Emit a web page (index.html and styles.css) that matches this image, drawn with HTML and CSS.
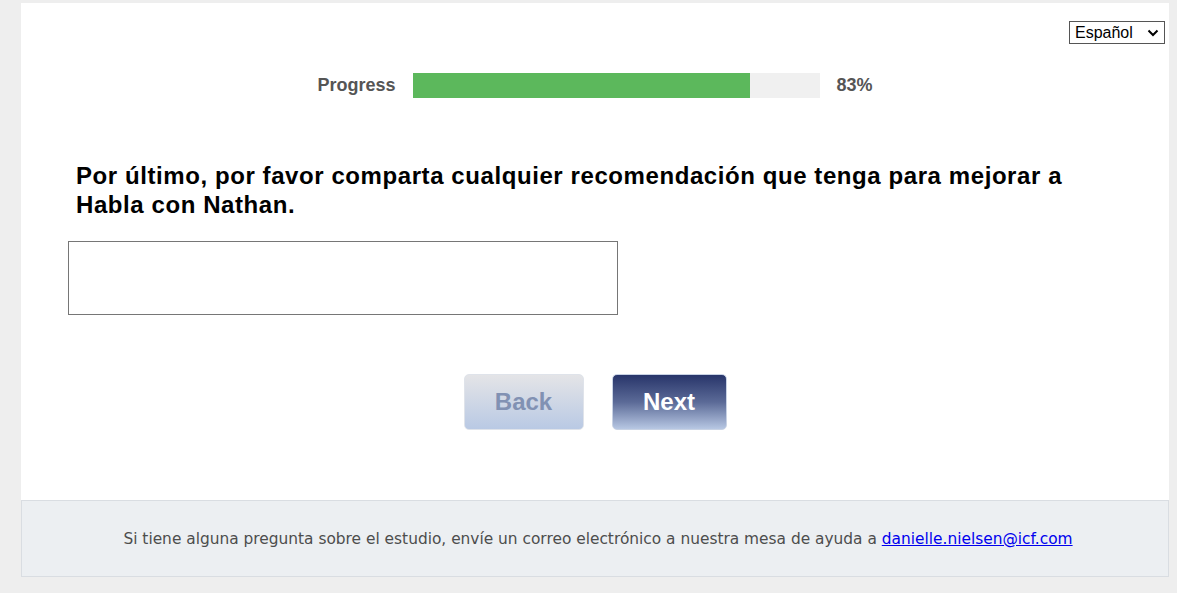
FILE: index.html
```html
<!DOCTYPE html>
<html lang="es">
<head>
<meta charset="utf-8">
<title>Encuesta</title>
<link rel="stylesheet" href="styles.css">
</head>
<body>
<div class="page">
  <main class="card">
    <div class="lang-row">
      <span class="lang-wrap">
        <select class="lang">
          <option>Español</option>
          <option>English</option>
        </select>
        <svg class="chev" width="12" height="8" viewBox="0 0 12 8" aria-hidden="true"><path d="M1.5 1.5 L6 6 L10.5 1.5" fill="none" stroke="#000" stroke-width="2"/></svg>
      </span>
    </div>
    <div class="progress">
      <span class="progress-label">Progress</span>
      <div class="progress-track"><div class="progress-fill" style="width:83%"></div></div>
      <span class="progress-pct">83%</span>
    </div>
    <h2 class="question">Por último, por favor comparta cualquier recomendación que tenga para mejorar a Habla con Nathan.</h2>
    <textarea class="answer"></textarea>
    <div class="nav">
      <button class="btn btn-back" type="button">Back</button>
      <button class="btn btn-next" type="button">Next</button>
    </div>
  </main>
  <footer class="footer">
    <p class="footer-text">Si tiene alguna pregunta sobre el estudio, envíe un correo electrónico a nuestra mesa de ayuda a <a href="#">danielle.nielsen@icf.com</a></p>
  </footer>
</div>
</body>
</html>
```

FILE: styles.css
```css
html, body {
  margin: 0;
  padding: 0;
  background: #eeeeee;
}
body {
  font-family: "Liberation Sans", Arial, sans-serif;
}
.page {
  padding: 3px 8px 16px 21px;
}
.card {
  background: #ffffff;
  height: 497px;
  box-sizing: border-box;
  padding: 18px 4px 0 0;
  display: flex;
  flex-direction: column;
}
.lang-row {
  display: flex;
  justify-content: flex-end;
}
.lang-wrap {
  position: relative;
  display: inline-block;
  height: 23px;
}
.lang {
  -webkit-appearance: none;
  appearance: none;
  font-family: "Liberation Sans", Arial, sans-serif;
  font-size: 16px;
  height: 23px;
  width: 96px;
  border: 1px solid #555;
  border-radius: 0;
  background: #fff;
  color: #000;
  padding: 0 0 0 5px;
  margin: 0;
  display: block;
}
.chev {
  position: absolute;
  right: 6px;
  top: 8px;
  pointer-events: none;
}
.progress {
  display: flex;
  align-items: center;
  justify-content: center;
  margin-top: 29px;
  margin-left: 4px;
  gap: 17px;
  color: #555555;
  font-weight: bold;
  font-size: 18px;
}
.progress-track {
  width: 407px;
  height: 25px;
  background: #f0f0f0;
}
.progress-fill {
  height: 100%;
  background: #5cb85c;
}
.question {
  margin: 63px 90px 0 55px;
  font-size: 24px;
  letter-spacing: 0.58px;
  line-height: 29px;
  font-weight: bold;
  color: #000;
}
.answer {
  margin: 22px 0 0 47px;
  width: 550px;
  height: 74px;
  box-sizing: border-box;
  border: 1px solid #767676;
  resize: none;
  font-family: inherit;
}
.nav {
  display: flex;
  justify-content: center;
  gap: 28px;
  margin-top: 59px;
  margin-left: 4px;
}
.btn {
  height: 56px;
  border-radius: 5px;
  font-family: "Liberation Sans", Arial, sans-serif;
  font-weight: bold;
  font-size: 24px;
  border: 1px solid #dfe3ea;
  padding: 0;
}
.btn-back {
  width: 120px;
  color: #8191b3;
  background: linear-gradient(to bottom, #e4e4e7 0%, #b9c9e4 100%);
}
.btn-next {
  width: 115px;
  color: #ffffff;
  border-color: #c8d2e4;
  background: linear-gradient(to bottom, #28356a 0%, #5b6a97 50%, #b7c7e3 100%);
}
.footer {
  height: 77px;
  box-sizing: border-box;
  border: 1px solid #d9dde2;
  background: #eceff2;
  display: flex;
  align-items: center;
  justify-content: center;
  padding-left: 6px;
}
.footer-text {
  margin: 0;
  font-family: "DejaVu Sans", Tahoma, sans-serif;
  font-size: 15.4px;
  color: #4d4d4d;
}
.footer-text a {
  color: #0000ee;
}
```
